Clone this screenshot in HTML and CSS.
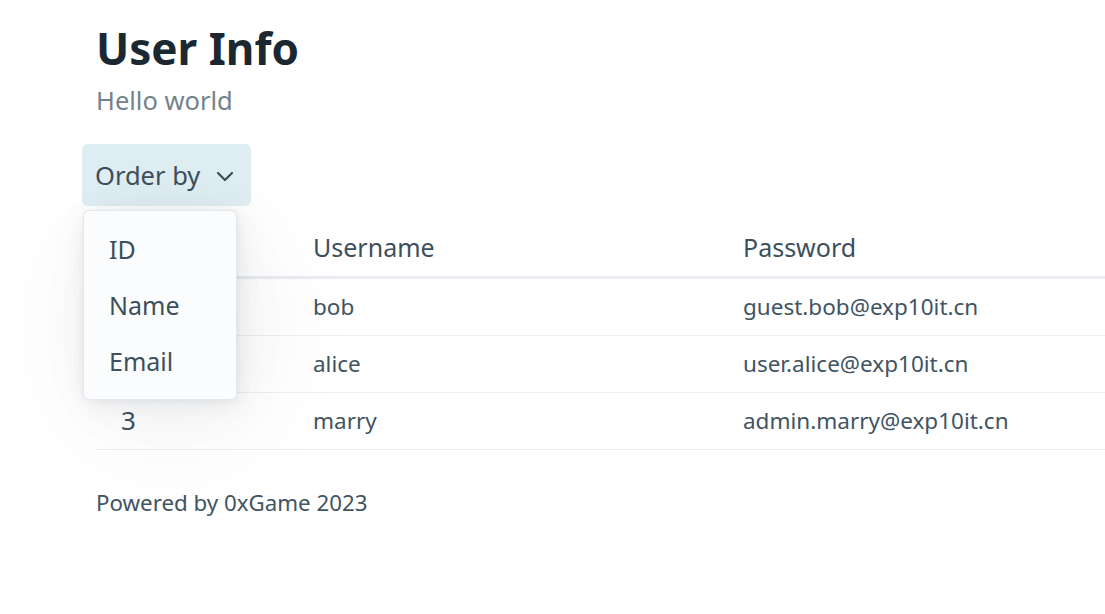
FILE: index.html
```html
<!DOCTYPE html>
<html lang="en">
<head>
<meta charset="utf-8">
<title>User Info</title>
<link rel="stylesheet" href="styles.css">
</head>
<body>
<main class="container">
  <hgroup class="heading">
    <h1 class="title">User Info</h1>
    <p class="subtitle">Hello world</p>
  </hgroup>
  <div class="dropdown">
    <button class="dropdown-toggle" type="button">
      <span>Order by</span>
      <svg class="chevron" width="18" height="11" viewBox="0 0 18 11" aria-hidden="true"><polyline points="2,2 9,9 16,2" fill="none" stroke="#3d4f5c" stroke-width="2.2" stroke-linecap="round" stroke-linejoin="round"/></svg>
    </button>
    <ul class="dropdown-menu">
      <li>ID</li>
      <li>Name</li>
      <li>Email</li>
    </ul>
  </div>
  <table class="users">
    <thead>
      <tr><th class="c-id">ID</th><th class="c-name">Username</th><th class="c-pass">Password</th></tr>
    </thead>
    <tbody>
      <tr><td class="c-id">1</td><td>bob</td><td>guest.bob@exp10it.cn</td></tr>
      <tr><td class="c-id">2</td><td>alice</td><td>user.alice@exp10it.cn</td></tr>
      <tr><td class="c-id">3</td><td>marry</td><td>admin.marry@exp10it.cn</td></tr>
    </tbody>
  </table>
  <footer class="footer">Powered by 0xGame 2023</footer>
</main>
</body>
</html>
```

FILE: styles.css
```css
html, body {
  margin: 0;
  padding: 0;
  background: #ffffff;
  overflow: hidden;
}
body {
  font-family: "Noto Sans", "Open Sans", sans-serif;
  color: #415462;
}
.container {
  padding: 20px 0 0 96px;
  width: 1200px;
}
.heading {
  margin: 0;
}
.title {
  margin: 0;
  font-size: 44px;
  line-height: 56px;
  font-weight: 700;
  color: #1b2832;
}
.subtitle {
  margin: 6px 0 0;
  font-size: 25.5px;
  line-height: 36px;
  color: #73828c;
}
.dropdown {
  position: relative;
  margin: 26px 0 0 -14px;
  height: 62px;
}
.dropdown-toggle {
  display: flex;
  align-items: center;
  gap: 16px;
  height: 62px;
  padding: 0 17px 0 13px;
  border: 0;
  border-radius: 6px;
  background: #dfeef3;
  font-family: inherit;
  font-size: 25.5px;
  color: #3d4f5c;
}
.chevron {
  display: block;
  margin-top: 2px;
}
.dropdown-menu {
  position: absolute;
  left: 1px;
  top: 66px;
  width: 154px;
  margin: 0;
  padding: 10px 0;
  list-style: none;
  background: #fbfcfd;
  border: 1px solid #e3e8ec;
  border-radius: 6px;
  box-sizing: border-box;
  z-index: 2;
  box-shadow:
    0.3px 0.7px 4px rgba(27, 40, 50, 0.02),
    0.8px 1.5px 9px rgba(27, 40, 50, 0.025),
    1.4px 2.8px 17px rgba(27, 40, 50, 0.03),
    2.5px 5px 30px rgba(27, 40, 50, 0.035),
    4.7px 9.4px 56px rgba(27, 40, 50, 0.04),
    11px 22px 135px rgba(27, 40, 50, 0.06);
}
.dropdown-menu li {
  padding: 0 0 0 25px;
  height: 56px;
  line-height: 56px;
  font-size: 25px;
  color: #3d4f5c;
}
.users {
  border-collapse: collapse;
  width: 1100px;
  margin-top: 14px;
}
.users th {
  height: 54px;
  padding: 0 22px 2px;
  text-align: left;
  font-weight: 400;
  font-size: 25px;
  color: #3d4f5c;
  border-bottom: 3px solid #e8ecf0;
}
.users td {
  height: 54px;
  padding: 0 22px 2px;
  font-size: 22.5px;
  border-bottom: 1px solid #eceff2;
}
.users .c-id {
  width: 148px;
  font-size: 26px;
  padding-left: 25px;
}
.users .c-name {
  width: 386px;
}
.footer {
  margin-top: 37px;
  font-size: 22.3px;
}
```
